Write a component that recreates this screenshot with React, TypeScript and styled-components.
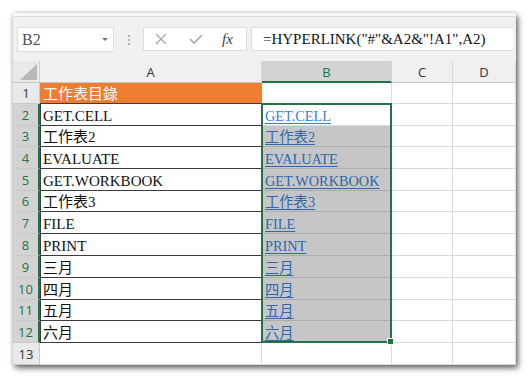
import React from "react";
import styled, { createGlobalStyle } from "styled-components";

const Global = createGlobalStyle`
  html, body { margin: 0; padding: 0; background: #ffffff; }
  body { width: 529px; height: 378px; overflow: hidden; }
`;

const Page = styled.div`
  padding: 13px 0 0 13px;
`;

const Window = styled.div`
  width: 503px;
  height: 352px;
  display: flex;
  flex-direction: column;
  background: #ffffff;
  box-shadow: 2px 3px 6px rgba(0, 0, 0, 0.6), 0 0 4px rgba(0, 0, 0, 0.15);
`;

const Toolbar = styled.div`
  height: 48px;
  box-sizing: border-box;
  background: #f1f1f1;
  border-top: 3px solid #f7f7f7;
  box-shadow: inset 0 1px 0 #dadada;
  display: flex;
  align-items: flex-start;
  padding: 11px 0 0 4px;
`;

const NameBox = styled.div`
  width: 97px;
  height: 25px;
  box-sizing: border-box;
  background: #ffffff;
  border: 1px solid #dedede;
  display: flex;
  align-items: center;
  justify-content: space-between;
  padding: 0 5px 0 4px;
  font-family: "Liberation Serif", serif;
  font-size: 16px;
  color: #505050;
`;

const DropArrow = styled.span`
  width: 0;
  height: 0;
  border-left: 3px solid transparent;
  border-right: 3px solid transparent;
  border-top: 3px solid #707070;
`;

const Grip = styled.div`
  width: 29px;
  height: 25px;
  display: flex;
  flex-direction: column;
  align-items: center;
  justify-content: center;
  gap: 2px;
`;

const GripDot = styled.span`
  width: 2px;
  height: 2px;
  background: #b0b0b0;
`;

const FxButtons = styled.div`
  width: 104px;
  height: 24px;
  box-sizing: border-box;
  background: #ffffff;
  border: 1px solid #dedede;
  display: flex;
  align-items: center;
  padding: 0 0 0 10px;
  gap: 20px;
`;

const FxText = styled.span`
  font-family: "Liberation Serif", serif;
  font-style: italic;
  font-size: 15px;
  color: #444;
  margin-left: -2px;
`;

const FormulaBar = styled.div`
  width: 262px;
  height: 24px;
  margin-left: 4px;
  box-sizing: border-box;
  background: #ffffff;
  border: 1px solid #dedede;
  border-right: none;
  display: flex;
  align-items: center;
  padding-left: 11px;
  font-family: "Liberation Serif", serif;
  font-size: 15px;
  color: #111;
  white-space: nowrap;
`;

const Sheet = styled.div`
  position: relative;
  display: grid;
  grid-template-columns: 27px 222px 130px 61px 63px;
  grid-template-rows: 22px 21px 22px 21px 22px 22px 21px 22px 22px 22px 22px 21px 22px 22px;
  flex: 1;
`;

const Corner = styled.div`
  background: #e9e9e9;
  border-right: 1px solid #d0d0d0;
  border-bottom: 1px solid #c8c8c8;
  box-sizing: border-box;
  display: flex;
  align-items: flex-end;
  justify-content: flex-end;
  padding: 0 2px 2px 0;
`;

const ColHead = styled.div<{ $sel?: boolean }>`
  box-sizing: border-box;
  background: ${(p) => (p.$sel ? "#d3d3d3" : "#f0f0f0")};
  border-right: 1px solid #d6d6d6;
  border-bottom: ${(p) => (p.$sel ? "2px solid #217346" : "1px solid #c8c8c8")};
  color: ${(p) => (p.$sel ? "#217346" : "#333")};
  display: flex;
  align-items: center;
  justify-content: center;
  font-family: "Open Sans", "Liberation Sans", sans-serif;
  font-size: 13px;
  padding-top: ${(p) => (p.$sel ? "1px" : "0")};
`;

const RowHead = styled.div<{ $sel?: boolean }>`
  box-sizing: border-box;
  background: ${(p) => (p.$sel ? "#d3d3d3" : "#e9e9e9")};
  border-bottom: 1px solid #c9c9c9;
  border-right: ${(p) => (p.$sel ? "2px solid #217346" : "1px solid #c8c8c8")};
  color: ${(p) => (p.$sel ? "#217346" : "#333")};
  display: flex;
  align-items: center;
  justify-content: center;
  font-family: "Open Sans", "Liberation Sans", sans-serif;
  font-size: 13px;
`;

const Cell = styled.div<{ $bg?: string; $boxed?: boolean; $link?: boolean; $ink?: string }>`
  box-sizing: border-box;
  background: ${(p) => p.$bg || "#ffffff"};
  border-right: 1px solid ${(p) => (p.$boxed ? "#3c3c3c" : "#dcdcdc")};
  border-bottom: 1px solid ${(p) => (p.$boxed ? "#3c3c3c" : p.$bg && p.$bg !== "#ffffff" ? "#acacac" : "#dcdcdc")};
  display: flex;
  align-items: flex-end;
  padding: 0 0 0 3px;
  font-family: "Liberation Serif", "Noto Sans CJK TC", serif;
  font-size: ${(p) => (p.$link ? "14.3px" : "15px")};
  line-height: 18px;
  color: ${(p) => p.$ink || "#111"};
  text-decoration: ${(p) => (p.$link ? "underline" : "none")};
  text-underline-offset: 2px;
  white-space: nowrap;
  overflow: hidden;
`;

const OrangeCell = styled(Cell)`
  border-right-color: #ed7d31;
  border-bottom-color: #3c3c3c;
`;

const Selection = styled.div`
  position: absolute;
  left: 248px;
  top: 42px;
  width: 131px;
  height: 240px;
  border: 2px solid #217346;
  box-sizing: border-box;
  pointer-events: none;
`;

const FillHandle = styled.div`
  position: absolute;
  right: -4px;
  bottom: -4px;
  width: 5px;
  height: 5px;
  background: #217346;
  border: 1px solid #ffffff;
`;

const BoxedColumnEdge = styled.div`
  position: absolute;
  left: 27px;
  top: 42px;
  width: 1px;
  height: 240px;
  background: #3c3c3c;
`;

const rows: string[] = [
  "GET.CELL",
  "工作表2",
  "EVALUATE",
  "GET.WORKBOOK",
  "工作表3",
  "FILE",
  "PRINT",
  "三月",
  "四月",
  "五月",
  "六月",
];

export default function App() {
  return (
    <>
      <Global />
      <Page>
        <Window>
          <Toolbar>
            <NameBox>
              <span>B2</span>
              <DropArrow />
            </NameBox>
            <Grip>
              <GripDot />
              <GripDot />
              <GripDot />
            </Grip>
            <FxButtons>
              <svg width="14" height="14" viewBox="0 0 14 14">
                <path d="M2 2 L12 12 M12 2 L2 12" stroke="#a8a8a8" strokeWidth="1.3" fill="none" />
              </svg>
              <svg width="16" height="14" viewBox="0 0 16 14">
                <path d="M2 7 L6 11 L14 3" stroke="#a8a8a8" strokeWidth="1.6" fill="none" />
              </svg>
              <FxText>fx</FxText>
            </FxButtons>
            <FormulaBar>=HYPERLINK("#"&amp;A2&amp;"!A1",A2)</FormulaBar>
          </Toolbar>
          <Sheet>
            <Corner>
              <svg width="17" height="16" viewBox="0 0 17 16">
                <polygon points="17,0 17,16 0,16" fill="#b8b8b8" />
              </svg>
            </Corner>
            <ColHead>A</ColHead>
            <ColHead $sel>B</ColHead>
            <ColHead>C</ColHead>
            <ColHead>D</ColHead>

            <RowHead>1</RowHead>
            <OrangeCell $bg="#ed7d31" $ink="#ffffff">
              工作表目錄
            </OrangeCell>
            <Cell />
            <Cell />
            <Cell />

            {rows.map((t, i) => (
              <React.Fragment key={i}>
                <RowHead $sel>{i + 2}</RowHead>
                <Cell $boxed>{t}</Cell>
                <Cell
                  $link
                  $bg={i === 0 ? "#ffffff" : "#c6c6c6"}
                  $ink={i === 0 ? "#3b7fcc" : "#2f67aa"}
                >
                  {t}
                </Cell>
                <Cell />
                <Cell />
              </React.Fragment>
            ))}

            <RowHead>13</RowHead>
            <Cell />
            <Cell />
            <Cell />
            <Cell />

            <BoxedColumnEdge />
            <Selection>
              <FillHandle />
            </Selection>
          </Sheet>
        </Window>
      </Page>
    </>
  );
}
